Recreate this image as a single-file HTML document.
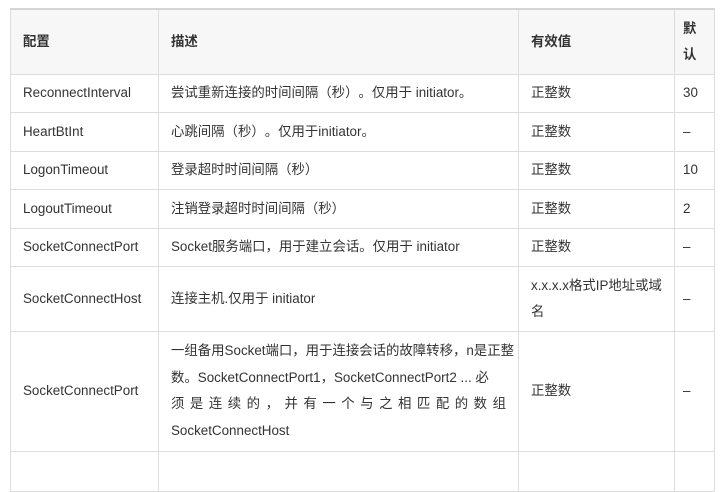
<!DOCTYPE html>
<html><head><meta charset="utf-8">
<style>
html,body{margin:0;padding:0;background:#fff;width:720px;height:456px;overflow:hidden}
table{position:absolute;left:10px;top:8px;width:704px;border-collapse:collapse;table-layout:fixed;
font-family:"Liberation Sans","Noto Sans CJK SC",sans-serif;font-size:13.4px;color:#333;border-top:2px solid #d4d4d4;text-spacing-trim:space-all}
td,th{border:1px solid #ddd;padding:0 12px;line-height:26px;text-align:left;vertical-align:middle;font-weight:normal;word-break:break-all;overflow:hidden}
th{background:#f7f7f7;font-weight:bold;color:#333}
td.d,th.d{padding:0 8px}
td.v{padding:0 10px 0 12px}
.j div{text-align:left;line-height:26.5px;white-space:nowrap}
.j div.s{text-align:justify;text-align-last:justify;white-space:normal}
</style></head><body>
<table>
<colgroup><col style="width:148px"><col style="width:360px"><col style="width:156px"><col style="width:40px"></colgroup>
<tr style="height:65px"><th>配置</th><th>描述</th><th>有效值</th><th class="d">默认</th></tr>
<tr style="height:38px"><td>ReconnectInterval</td><td>尝试重新连接的时间间隔（秒）。仅用于 initiator。</td><td>正整数</td><td class="d">30</td></tr>
<tr style="height:39px"><td>HeartBtInt</td><td>心跳间隔（秒）。仅用于initiator。</td><td>正整数</td><td class="d">–</td></tr>
<tr style="height:38px"><td>LogonTimeout</td><td>登录超时时间间隔（秒）</td><td>正整数</td><td class="d">10</td></tr>
<tr style="height:39px"><td>LogoutTimeout</td><td>注销登录超时时间间隔（秒）</td><td>正整数</td><td class="d">2</td></tr>
<tr style="height:38px"><td>SocketConnectPort</td><td>Socket服务端口，用于建立会话。仅用于 initiator</td><td>正整数</td><td class="d">–</td></tr>
<tr style="height:65px"><td>SocketConnectHost</td><td>连接主机.仅用于 initiator</td><td class="v"><div style="white-space:nowrap">x.x.x.x格式IP地址或域</div><div>名</div></td><td class="d">–</td></tr>
<tr style="height:120px"><td>SocketConnectPort</td><td class="j"><div>一组备用Socket端口，用于连接会话的故障转移，n是正整</div><div>数。SocketConnectPort1，SocketConnectPort2 ... 必</div><div class="s">须 是 连 续 的 ， 并 有 一 个 与 之 相 匹 配 的 数 组</div><div>SocketConnectHost</div></td><td>正整数</td><td class="d">–</td></tr>
<tr style="height:40px"><td>&nbsp;</td><td>&nbsp;</td><td>&nbsp;</td><td>&nbsp;</td></tr>
</table>
</body></html>
